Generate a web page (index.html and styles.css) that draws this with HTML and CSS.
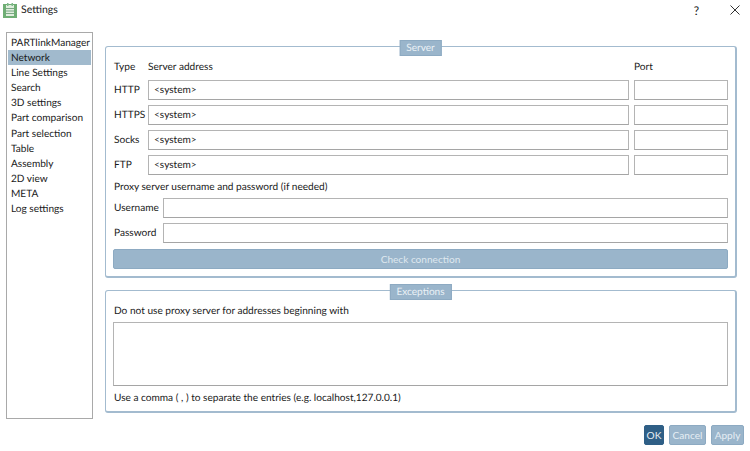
FILE: index.html
```html
<!DOCTYPE html>
<html lang="en">

<head>
    <meta charset="UTF-8">
    <meta name="viewport" content="width=device-width, initial-scale=1.0">
    <title>Settings</title>
    <link rel="stylesheet" href="styles.css">
</head>

<body>
    <div class="titlebar">
        <svg class="app-icon" width="14" height="15" viewBox="0 0 14 15">
            <rect x="0" y="1" width="14" height="14" fill="#6fae74" />
            <rect x="3" y="2" width="8" height="11" fill="#dfeedd" />
            <rect x="4" y="0" width="1.500" height="3" fill="#7fb98a" />
            <rect x="8.500" y="0" width="1.500" height="3" fill="#7fb98a" />
            <path d="M3 5.500h8M3 8h8M3 10.500h8" stroke="#7aa884" stroke-width="1" />
        </svg>
        <span class="title">Settings</span>
        <span class="help">?</span>
        <svg class="close" width="10" height="10" viewBox="0 0 10 10">
            <path d="M.5.500l9 9M9.500.500l-9 9" stroke="#333" stroke-width="1" fill="none" />
        </svg>
    </div>

    <div class="main">
        <ul class="nav">
            <li>PARTlinkManager</li>
            <li class="active">Network</li>
            <li>Line Settings</li>
            <li>Search</li>
            <li>3D settings</li>
            <li>Part comparison</li>
            <li>Part selection</li>
            <li>Table</li>
            <li>Assembly</li>
            <li>2D view</li>
            <li>META</li>
            <li>Log settings</li>
        </ul>

        <div class="content">
            <div class="group server">
                <span class="legend">Server</span>
                <div class="proxy-grid">
                    <span>Type</span><span>Server address</span><span>Port</span>
                    <span>HTTP</span><div class="field">&lt;system&gt;</div><div class="field"></div>
                    <span>HTTPS</span><div class="field">&lt;system&gt;</div><div class="field"></div>
                    <span>Socks</span><div class="field">&lt;system&gt;</div><div class="field"></div>
                    <span>FTP</span><div class="field">&lt;system&gt;</div><div class="field"></div>
                </div>
                <p class="proxy-note">Proxy server username and password (if needed)</p>
                <div class="login-grid">
                    <span>Username</span><div class="field"></div>
                    <span>Password</span><div class="field"></div>
                </div>
                <button class="check-button">Check connection</button>
            </div>

            <div class="group exceptions">
                <span class="legend">Exceptions</span>
                <p class="except-label">Do not use proxy server for addresses beginning with</p>
                <div class="field except-box"></div>
                <p class="except-hint">Use a comma ( , ) to separate the entries (e.g. localhost,127.0.0.1)</p>
            </div>
        </div>
    </div>

    <div class="actions">
        <button class="btn btn-ok">OK</button>
        <button class="btn btn-cancel">Cancel</button>
        <button class="btn btn-apply">Apply</button>
    </div>
</body>

</html>
```

FILE: styles.css
```css
html,
body {
    height: 100%;
}

body {
    margin: 0;
    background-color: #fff;
    color: #1a1a1a;
    font-family: Lato, Roboto, sans-serif;
    font-size: 10.1px;
    text-rendering: geometricPrecision;
    overflow: hidden;
}

p {
    margin: 0;
}

.titlebar {
    display: flex;
    align-items: center;
    height: 20px;
    padding: 0 10px 0 3px;
}

.app-icon {
    margin-right: 4px;
}

.title {
    font-size: 10.5px;
    flex: 1;
}

.help {
    font-size: 12px;
    margin-right: 31px;
}

.main {
    display: flex;
    height: 387px;
    margin-top: 12px;
    padding-left: 6px;
}

.nav {
    list-style: none;
    box-sizing: border-box;
    width: 87px;
    height: 387px;
    margin: 0;
    padding: 2px 1px 0 1px;
    border: 1px solid #a9a9a9;
}

.nav li {
    height: 15.100px;
    line-height: 17px;
    padding-left: 3px;
    white-space: nowrap;
}

.nav li.active {
    background-color: #a1bacd;
}

.content {
    width: 632px;
    margin-left: 12px;
    padding-top: 14px;
}

.group {
    position: relative;
    box-sizing: border-box;
    border: 1px solid #a3bbcf;
    border-bottom-width: 2px;
    border-right-width: 2px;
    border-radius: 3px;
    padding: 0 7px;
}

.server {
    height: 232px;
    padding-top: 12px;
}

.exceptions {
    height: 123px;
    margin-top: 12px;
    padding-top: 13px;
}

/* legend sits on the top border of the group */
.legend {
    position: absolute;
    top: -7px;
    left: 50%;
    transform: translateX(-50%);
    height: 14px;
    line-height: 14px;
    padding: 0 6px;
    background-color: #9ab5cb;
    color: #eaf1f6;
    border: 1px solid #8daac2;
}

.proxy-grid {
    display: grid;
    grid-template-columns: 34px 481px 94px;
    grid-template-rows: 16px 20px 20px 20px 20px;
    row-gap: 5px;
    align-items: center;
    padding-left: 1px;
    line-height: 16px;
}

.proxy-grid > :nth-child(3n) {
    margin-left: 5px;
}

.field {
    box-sizing: border-box;
    height: 20px;
    line-height: 18px;
    padding-left: 5px;
    background-color: #fff;
    border: 1px solid #b4b4b4;
    border-bottom-color: #a5a5a5;
}

.proxy-grid .field:nth-child(3n) {
    width: 94px;
}

.proxy-note {
    margin-top: 5px;
    height: 14px;
    line-height: 15px;
    padding-left: 1px;
}

.login-grid {
    display: grid;
    grid-template-columns: 49px 565px;
    grid-template-rows: 20px 20px;
    row-gap: 5px;
    align-items: center;
    margin-top: 4px;
    padding-left: 1px;
    line-height: 16px;
}

.check-button {
    display: block;
    width: 615px;
    height: 20px;
    margin-top: 6px;
    padding: 0;
    background-color: #9ab5cb;
    color: #dfe8ef;
    border: 1px solid #8daac2;
    border-radius: 2px;
    font: inherit;
}

.except-label {
    height: 14px;
    line-height: 16px;
    margin-top: -1px;
    padding-left: 1px;
}

.except-box {
    width: 615px;
    height: 64px;
    margin-top: 5px;
}

.except-hint {
    margin-top: 5px;
    height: 14px;
    line-height: 15px;
    padding-left: 1px;
}

.actions {
    display: flex;
    justify-content: flex-end;
    gap: 5px;
    margin-top: 6px;
    padding-right: 6px;
}

.btn {
    height: 20px;
    padding: 0;
    border: 1px solid #8daac2;
    border-radius: 2px;
    font: inherit;
    color: #e6eef4;
    background-color: #9ab5cb;
}

.btn-ok {
    width: 20px;
    background-color: #2f5f86;
    border-color: #2f5f86;
}

.btn-cancel {
    width: 37px;
}

.btn-apply {
    width: 33px;
}
```
